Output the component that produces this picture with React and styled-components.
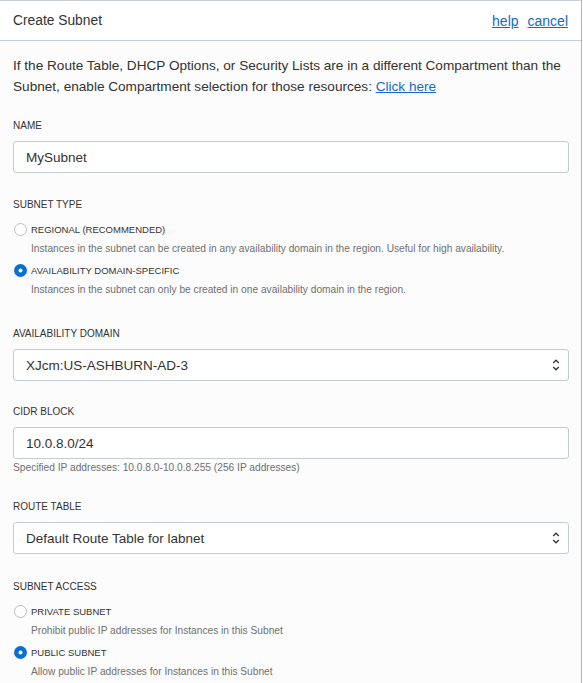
import React from 'react'
import styled, { createGlobalStyle, css } from 'styled-components'

const Global = createGlobalStyle`
  html, body { margin: 0; padding: 0; background: #fff; }
  body { font-family: "Liberation Sans", Arial, sans-serif; color: #333; }
  * { box-sizing: border-box; }
`

const Panel = styled.div`
  width: 582px;
  height: 683px;
  border-top: 1px solid #c9d0d6;
  border-right: 1px solid #aab6c2;
  background: #fcfcfc;
  overflow: hidden;
`

const Header = styled.div`
  height: 40px;
  display: flex;
  align-items: center;
  justify-content: space-between;
  padding: 0 13px 0 13px;
  background: #fff;
  border-bottom: 1px solid #c4ccd4;
`

const Title = styled.div`
  font-size: 13.8px;
  color: #333;
`

const Links = styled.div`
  display: flex;
  gap: 9px;
`

const Link = styled.a`
  color: #1468cf;
  text-decoration: underline;
  font-size: ${(p) => p.$size || 14}px;
  cursor: pointer;
`

const Body = styled.div`
  padding: 14px 13px 0 13px;
`

const Intro = styled.p`
  margin: 0;
  font-size: 13.6px;
  line-height: 21px;
  color: #333;
`

const Field = styled.div`
  margin-top: ${(p) => p.$top || 24}px;
`

const Label = styled.div`
  font-size: 10px;
  line-height: 14px;
  text-transform: uppercase;
  color: #333;
  margin-bottom: ${(p) => (p.$flush ? 0 : 8)}px;
`

const boxStyle = css`
  width: 556px;
  height: 32px;
  border: 1px solid #c3cbd3;
  border-radius: 3px;
  background: #fff;
  display: flex;
  align-items: center;
  padding: 0 12px;
  font-size: 13.5px;
  color: #333;
`

const Input = styled.div`
  ${boxStyle}
`

const Select = styled.div`
  ${boxStyle}
  justify-content: space-between;
  padding-right: 8px;
`

const Hint = styled.div`
  font-size: 10.2px;
  line-height: 14px;
  color: #707070;
  margin-top: ${(p) => p.$top || 0}px;
  padding-left: ${(p) => p.$indent || 0}px;
`

const RadioRow = styled.div`
  display: flex;
  align-items: center;
  height: 16px;
  margin-top: ${(p) => p.$top}px;
`

const Dot = styled.span`
  width: 13px;
  height: 13px;
  border-radius: 50%;
  margin-left: 1px;
  margin-right: 4px;
  flex: none;
  background: #fff;
  ${(p) =>
    p.$checked
      ? css`
          box-shadow: inset 0 0 0 4.5px #0a6fd1;
        `
      : css`
          border: 1px solid #bdbdbd;
        `}
`

const RadioText = styled.span`
  font-size: 9.5px;
  color: #333;
  text-transform: uppercase;
`

const Chevrons = () => (
  <svg width="8" height="14" viewBox="0 0 8 14" fill="none" stroke="#333" strokeWidth="1.3">
    <path d="M1.2 5 L4 2.2 L6.8 5" />
    <path d="M1.2 9 L4 11.8 L6.8 9" />
  </svg>
)

function Radio({ checked, label, hint, top }) {
  return (
    <>
      <RadioRow $top={top}>
        <Dot $checked={checked} />
        <RadioText>{label}</RadioText>
      </RadioRow>
      <Hint $top={5} $indent={18}>{hint}</Hint>
    </>
  )
}

export default function App() {
  return (
    <>
      <Global />
      <Panel>
        <Header>
          <Title>Create Subnet</Title>
          <Links>
            <Link>help</Link>
            <Link>cancel</Link>
          </Links>
        </Header>
        <Body>
          <Intro>
            If the Route Table, DHCP Options, or Security Lists are in a different Compartment than the
            Subnet, enable Compartment selection for those resources: <Link $size={13.6}>Click here</Link>
          </Intro>

          <Field $top={22}>
            <Label>Name</Label>
            <Input>MySubnet</Input>
          </Field>

          <Field $top={25}>
            <Label $flush>Subnet Type</Label>
            <Radio
              top={9}
              label="Regional (Recommended)"
              hint="Instances in the subnet can be created in any availability domain in the region. Useful for high availability."
            />
            <Radio
              checked
              top={6}
              label="Availability Domain-Specific"
              hint="Instances in the subnet can only be created in one availability domain in the region."
            />
          </Field>

          <Field $top={30}>
            <Label>Availability Domain</Label>
            <Select>
              <span>XJcm:US-ASHBURN-AD-3</span>
              <Chevrons />
            </Select>
          </Field>

          <Field $top={24}>
            <Label>CIDR Block</Label>
            <Input>10.0.8.0/24</Input>
            <Hint $top={2}>Specified IP addresses: 10.0.8.0-10.0.8.255 (256 IP addresses)</Hint>
          </Field>

          <Field $top={25}>
            <Label>Route Table</Label>
            <Select>
              <span>Default Route Table for labnet</span>
              <Chevrons />
            </Select>
          </Field>

          <Field $top={26}>
            <Label $flush>Subnet Access</Label>
            <Radio
              top={9}
              label="Private Subnet"
              hint="Prohibit public IP addresses for Instances in this Subnet"
            />
            <Radio
              checked
              top={6}
              label="Public Subnet"
              hint="Allow public IP addresses for Instances in this Subnet"
            />
          </Field>
        </Body>
      </Panel>
    </>
  )
}
